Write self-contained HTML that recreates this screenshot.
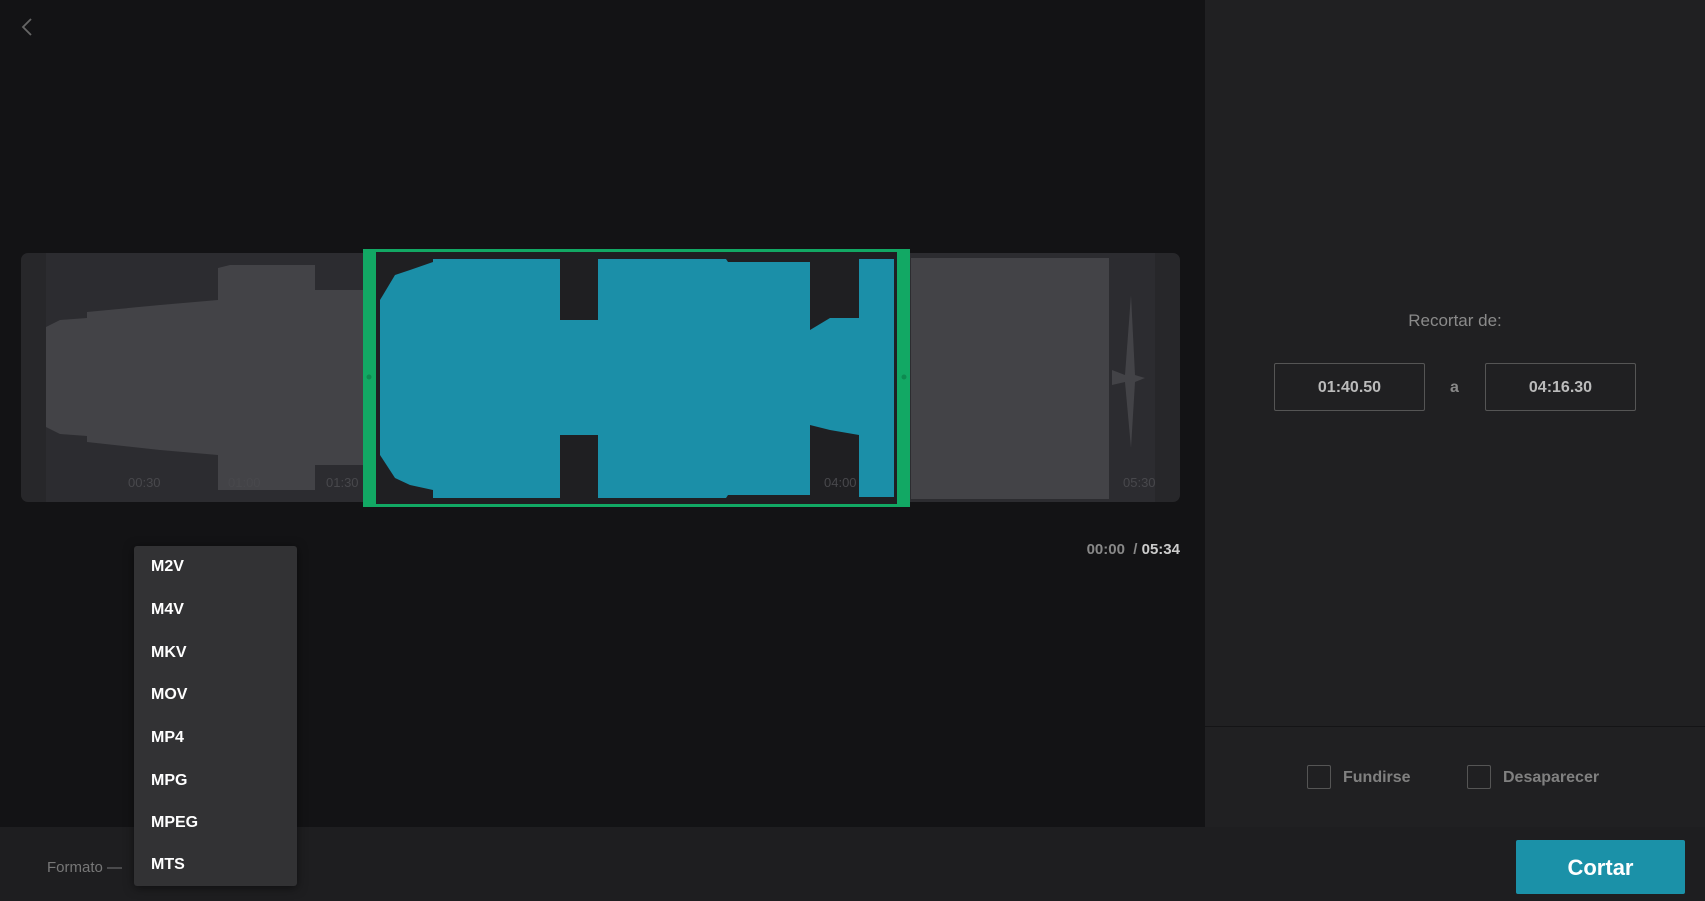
<!DOCTYPE html>
<html><head><meta charset="utf-8"><style>
*{margin:0;padding:0;box-sizing:border-box}
body{width:1705px;height:901px;background:#131315;font-family:"Liberation Sans",sans-serif;position:relative;overflow:hidden}
.abs{position:absolute}
.right{left:1205px;top:0;width:500px;height:827px;background:#202022}
.bottom{left:0;top:827px;width:1705px;height:74px;background:#1e1e20}
.box{border:1px solid #555;border-radius:2px;color:#bbb;font-size:16px;font-weight:bold;text-align:center;line-height:48px;width:151px;height:48px}
.cb{width:24px;height:24px;border:1px solid #555;border-radius:2px}
.lbl{color:#808080;font-size:16px;font-weight:bold}
.dd{left:134px;top:546px;width:163px;height:340px;background:#323234;border-radius:3px;box-shadow:0 2px 10px rgba(0,0,0,.5)}
.dd div{position:absolute;left:17px;color:#fff;font-size:16px;font-weight:bold}
</style></head><body>
<svg class="abs" style="left:18px;top:16px" width="20" height="22"><path d="M13 3 L5 11 L13 19" stroke="#666" stroke-width="1.8" fill="none"/></svg>

<svg class="abs" style="left:0;top:0" width="1200" height="520">
<rect x="21" y="253" width="1159" height="249" rx="7" fill="#27272a"/>
<rect x="46" y="253" width="1109" height="249" fill="#2c2c30"/>
<g fill="#434347">
<polygon points="46,327 60,320 87,318 87,312 160,305 218,300 218,268 230,265 315,265 315,290 363,290 363,465 315,465 315,490 218,490 218,455 160,450 87,442 87,436 60,434 46,427"/>
<polygon points="911,258 1109,258 1109,499 911,499"/>
<polygon points="1112,370 1125,375 1131,295 1135,375 1145,378 1135,382 1131,448 1125,382 1112,385"/>
</g>
<rect x="363" y="249" width="547" height="258" fill="#1f1f22"/>
<g fill="#1b8fa8">
<polygon points="380,300 395,275 410,270 433,262 433,259 560,259 560,320 598,320 598,259 726,259 728,262 810,262 810,330 830,318 859,318 859,259 894,259 894,497 859,497 859,435 830,430 810,425 810,495 728,495 726,498 598,498 598,435 560,435 560,498 433,498 433,490 410,485 395,478 380,455"/>
</g>
<rect x="364.5" y="250.5" width="544" height="255" fill="none" stroke="#12a864" stroke-width="3"/>
<rect x="363" y="249" width="13" height="258" fill="#12a864"/>
<rect x="897" y="249" width="13" height="258" fill="#12a864"/>
<circle cx="369" cy="377" r="2.5" fill="#0d8a50"/><circle cx="904" cy="377" r="2.5" fill="#0d8a50"/>
<g fill="#48484c" font-size="13" font-family="Liberation Sans">
<text x="128" y="487">00:30</text><text x="228" y="487">01:00</text><text x="326" y="487">01:30</text><text x="824" y="487">04:00</text><text x="1123" y="487">05:30</text></g>
<polygon points="589,535 612,549 589,563" fill="#888"/>
</svg>
<div class="abs" style="left:1050px;top:541px;width:130px;text-align:right;font-size:15px;font-weight:bold;color:#888">00:00 &nbsp;/ <span style="color:#ccc">05:34</span></div>

<div class="abs right"></div>
<div class="abs" style="left:1205px;top:311px;width:500px;text-align:center;color:#8a8a8a;font-size:17px">Recortar de:</div>
<div class="abs box" style="left:1274px;top:363px">01:40.50</div>
<div class="abs" style="left:1450px;top:379px;color:#888;font-size:16px;font-weight:bold">a</div>
<div class="abs box" style="left:1485px;top:363px">04:16.30</div>
<div class="abs" style="left:1205px;top:726px;width:500px;height:1px;background:#141416"></div>
<div class="abs cb" style="left:1307px;top:765px"></div>
<div class="abs lbl" style="left:1343px;top:769px">Fundirse</div>
<div class="abs cb" style="left:1467px;top:765px"></div>
<div class="abs lbl" style="left:1503px;top:769px">Desaparecer</div>

<div class="abs bottom"></div>
<div class="abs" style="left:47px;top:859px;color:#777;font-size:15px">Formato —</div>
<div class="abs" style="left:1516px;top:840px;width:169px;height:54px;background:#1b91a8;border-radius:2px;color:#fff;font-size:22px;font-weight:bold;text-align:center;line-height:56px">Cortar</div>

<div class="abs dd">
<div style="top:12px">M2V</div><div style="top:55px">M4V</div><div style="top:98px">MKV</div><div style="top:140px">MOV</div><div style="top:183px">MP4</div><div style="top:226px">MPG</div><div style="top:268px">MPEG</div><div style="top:310px">MTS</div>
</div>
</body></html>
